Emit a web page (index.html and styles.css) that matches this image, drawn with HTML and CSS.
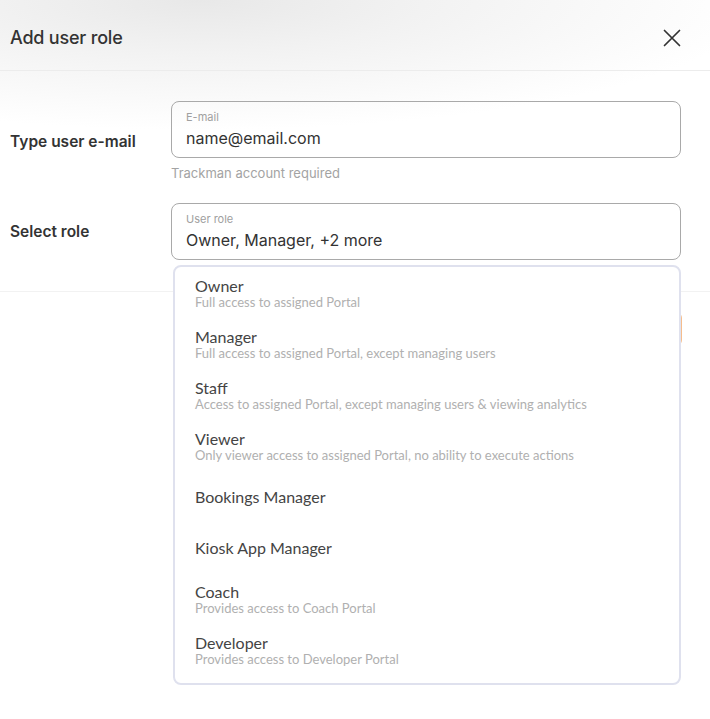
FILE: index.html
```html
<!DOCTYPE html>
<html>
<head>
<meta charset="utf-8">
<link rel="stylesheet" href="styles.css">
</head>
<body>
<div class="modal">
  <div class="header">
    <h1 class="title">Add user role</h1>
    <button class="close" aria-label="Close">
      <svg width="18" height="18" viewBox="0 0 18 18"><path d="M1.5 1.5 L16.5 16.5 M16.5 1.5 L1.5 16.5" stroke="#333" stroke-width="1.7" fill="none" stroke-linecap="round"/></svg>
    </button>
  </div>
  <div class="form">
    <div class="row">
      <div class="label">Type user e-mail</div>
      <div class="fieldwrap">
        <div class="field">
          <div class="flabel">E-mail</div>
          <div class="fvalue">name@email.com</div>
        </div>
        <div class="helper">Trackman account required</div>
      </div>
    </div>
    <div class="row row2">
      <div class="label">Select role</div>
      <div class="fieldwrap">
        <div class="field">
          <div class="flabel">User role</div>
          <div class="fvalue">Owner, Manager, +2 more</div>
        </div>
      </div>
    </div>
  </div>
  <div class="footer">
    <button class="primary">Add</button>
  </div>
  <div class="dropdown">
    <div class="opt"><div class="otitle">Owner</div><div class="odesc">Full access to assigned Portal</div></div>
    <div class="opt"><div class="otitle">Manager</div><div class="odesc">Full access to assigned Portal, except managing users</div></div>
    <div class="opt"><div class="otitle">Staff</div><div class="odesc">Access to assigned Portal, except managing users &amp; viewing analytics</div></div>
    <div class="opt"><div class="otitle">Viewer</div><div class="odesc">Only viewer access to assigned Portal, no ability to execute actions</div></div>
    <div class="opt"><div class="otitle">Bookings Manager</div></div>
    <div class="opt"><div class="otitle">Kiosk App Manager</div></div>
    <div class="opt"><div class="otitle">Coach</div><div class="odesc">Provides access to Coach Portal</div></div>
    <div class="opt"><div class="otitle">Developer</div><div class="odesc">Provides access to Developer Portal</div></div>
  </div>
</div>
</body>
</html>
```
FILE: styles.css
```css
* { box-sizing: border-box; }
html, body { margin: 0; padding: 0; background: #fff; }
body { width: 710px; height: 719px; overflow: hidden; font-family: Inter, "Liberation Sans", sans-serif; color: #333; }
.modal { position: relative; width: 710px; height: 719px;
  background: radial-gradient(ellipse 560px 130px at 200px 0px, #e8e8e8 0%, #f2f2f2 40%, rgba(255,255,255,0) 100%), #fff; }
.header { height: 71px; display: flex; align-items: center; justify-content: space-between; padding: 5px 29px 0 10px; border-bottom: 1px solid #ececec; }
.title { margin: 0; font-size: 18px; font-weight: 500; color: #333; letter-spacing: -0.2px; }
.close { border: 0; background: none; padding: 0; width: 18px; height: 18px; display: flex; cursor: pointer; }
.form { padding-top: 30px; }
.row { display: grid; grid-template-columns: 171px 510px; align-items: center; }
.row2 { margin-top: 22px; }
.label { font-size: 15.5px; font-weight: 600; color: #333; padding-left: 10px; }
.field { height: 57px; border: 1px solid #a9a9a9; border-radius: 8px; padding: 8px 14px 0; }
.flabel { font-size: 11px; color: #a0a0a0; line-height: 14px; }
.fvalue { font-size: 16px; color: #333; line-height: 22px; margin-top: 3px; }
.helper { font-size: 13px; color: #a3a3a3; margin-top: 7px; line-height: 16px; }
.footer { margin-top: 31px; border-top: 1px solid #f2f2f2; display: flex; justify-content: flex-end; padding: 20px 28px 0 0; }
.primary { height: 34px; width: 90px; border: 1px solid #f6bd8c; background: #fff; border-radius: 6px; color: #e88a3c; font-family: inherit; }
.dropdown { position: absolute; left: 173px; top: 265px; width: 508px; background: #fff; border: 2px solid #dfe1ee; border-radius: 8px; padding: 0 0 8px; font-family: Lato, "Liberation Sans", sans-serif; }
.opt { height: 51px; padding-left: 20px; display: flex; flex-direction: column; justify-content: center; }
.otitle { font-size: 16px; color: #444; line-height: 19px; }
.odesc { font-size: 13px; color: #b0b0b0; line-height: 15px; }
```
